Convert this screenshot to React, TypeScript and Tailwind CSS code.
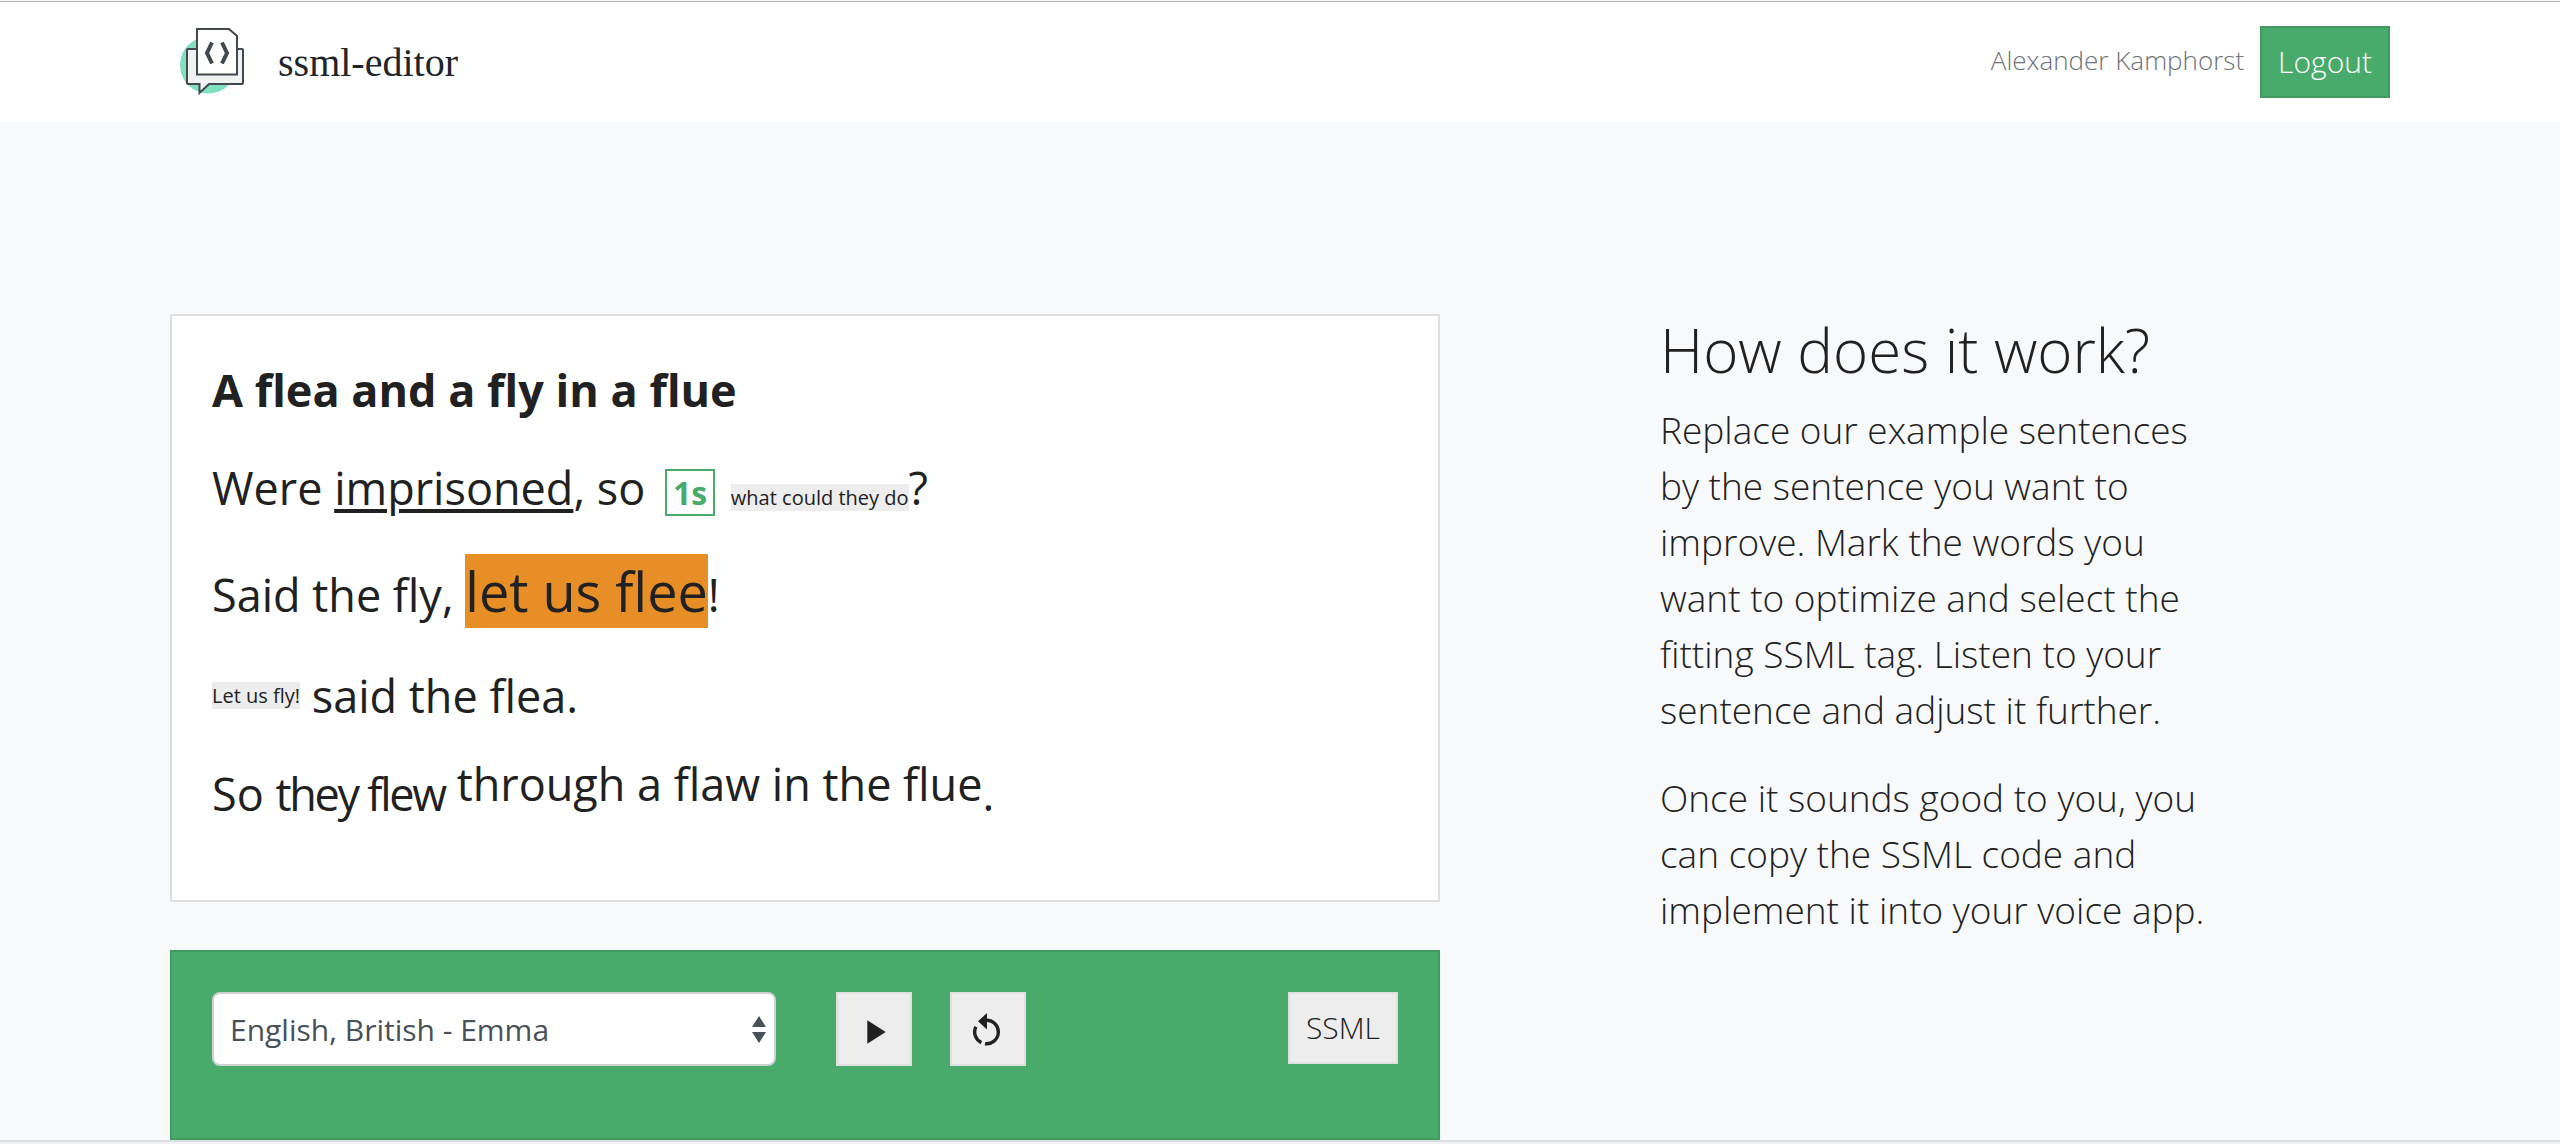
import type { ReactNode } from 'react'
import { MdPlayArrow } from 'react-icons/md'

function Logo() {
  return (
    <svg width="64" height="70" viewBox="0 0 64 70" fill="none" aria-hidden="true">
      <circle cx="28.500" cy="38" r="28.500" fill="#82dfbf" />
      <path
        d="M8 22h54a1 1 0 0 1 1 1v33a1 1 0 0 1-1 1H29L19.500 66V57H8a1 1 0 0 1-1-1V23a1 1 0 0 1 1-1Z"
        fill="#f1f2f2"
        stroke="#42484f"
        strokeWidth="2"
      />
      <path d="M17 2h32l8 7v38.500H17V2Z" fill="#fff" stroke="#42484f" strokeWidth="2" />
      <path d="M32 15.500l-5 10.500 5 10.500M42 15.500L47 26l-5 10.500" stroke="#42484f" strokeWidth="4" />
    </svg>
  )
}

function ResetIcon() {
  return (
    <svg width="30" height="33" viewBox="0 0 30 33" fill="none" aria-hidden="true">
      <path d="M13.500 7.200A11.800 11.800 0 1 1 12 30.700M2.900 13.800A11.800 11.800 0 0 0 8.300 29.600" stroke="#212121" strokeWidth="3.400" />
      <path d="M5 8.300L14 0v16.500z" fill="#212121" />
    </svg>
  )
}

function Header() {
  return (
    <header className="border-t border-[#b3b6b6] bg-white">
      <div className="mx-auto flex max-w-[2280px] items-center justify-between px-[30px] py-6">
        <a href="#" className="flex items-center gap-[34px] pl-2.5">
          <Logo />
          <span className="pt-0.5 font-['Liberation_Serif',serif] text-[40px] leading-[60px] text-[#212529]">
            ssml-editor
          </span>
        </a>
        <div className="flex items-center gap-4">
          <span className="pb-1 text-[26px] text-[#6f7377]">Alexander Kamphorst</span>
          <button type="button" className="border-2 border-[#419b60] bg-[#49ab6b] px-4 py-2.5 text-[30px] leading-12 text-white">
            Logout
          </button>
        </div>
      </div>
    </header>
  )
}

function Whisper({ children }: { children: ReactNode }) {
  return <span className="bg-[#ededed] text-[20px]">{children}</span>
}

function Raised({ children }: { children: ReactNode }) {
  return <span className="relative -top-2.5">{children}</span>
}

function Editor() {
  return (
    <div className="flex flex-col gap-[30px] border-2 border-[#dedfe0] bg-white px-10 pt-10 pb-[73px] text-[45px] leading-normal font-normal">
      <p className="font-bold">A flea and a fly in a flue</p>
      <p>
        Were <span className="underline decoration-4 underline-offset-4">imprisoned</span>, so{' '}
        <span className="mr-1 ml-2 border-2 border-[#49ab6b] px-1.5 text-[32px] font-bold text-[#49ab6b]">1s</span>{' '}
        <Whisper>what could they do</Whisper>?
      </p>
      <p>
        Said the fly, <span className="bg-[#e78f26] text-[54px]">let us flee</span>!
      </p>
      <p>
        <Raised>
          <Whisper>Let us fly!</Whisper>
        </Raised>{' '}
        said the flea.
      </p>
      <p>
        So <span className="tracking-tighter">they flew</span> <Raised>through a flaw in the flue</Raised>.
      </p>
    </div>
  )
}

function Controls() {
  return (
    <div className="flex items-start border-2 border-[#419b60] bg-[#49ab6b] px-10 pt-10 pb-[72px]">
      <div className="relative w-[564px]">
        <select
          aria-label="Voice"
          className="h-[74px] w-full appearance-none rounded-lg border-2 border-[#ced0d2] bg-white px-4 text-[30px] font-normal text-[#495057]"
        >
          <option>English, British - Emma</option>
        </select>
        <svg
          width="14"
          height="27"
          viewBox="0 0 14 27"
          className="pointer-events-none absolute top-6 right-2.5"
          fill="#495057"
          aria-hidden="true"
        >
          <path d="M7 0l7 11H0zM7 27L0 16h14z" />
        </svg>
      </div>
      <button type="button" aria-label="Play" className="ml-15 flex h-[74px] w-[76px] items-center justify-center border-2 border-[#dfe0e0] bg-[#ededed] pt-1.5">
        <MdPlayArrow size={40} />
      </button>
      <button type="button" aria-label="Reset" className="ml-[38px] flex h-[74px] w-[76px] items-center justify-center border-2 border-[#dfe0e0] bg-[#ededed]">
        <ResetIcon />
      </button>
      <button type="button" className="ml-auto border-2 border-[#dfe0e0] bg-[#ededed] px-4 py-2.5 text-[30px] leading-12">
        SSML
      </button>
    </div>
  )
}

export default function App() {
  return (
    <div className="flex min-h-screen flex-col bg-[#f8f9fb] pt-px font-['Open_Sans',sans-serif] font-light text-[#212121]">
      <Header />
      <main className="mx-auto grid w-full max-w-[2280px] flex-1 grid-cols-12 pt-48">
        <div className="col-span-7 flex flex-col gap-12 px-[30px]">
          <Editor />
          <Controls />
        </div>
        <aside className="col-span-3 col-start-9">
          <h1 className="mb-4 text-[60px] leading-[72px]">How does it work?</h1>
          <p className="mb-8 text-[37px] leading-14">
            Replace our example sentences by the sentence you want to improve. Mark the words you want to optimize and
            select the fitting SSML tag. Listen to your sentence and adjust it further.
          </p>
          <p className="text-[37px] leading-14">
            Once it sounds good to you, you can copy the SSML code and implement it into your voice app.
          </p>
        </aside>
      </main>
      <footer className="h-1 border-t-2 border-[#dcdfe1] bg-[#f1f1f1]" />
    </div>
  )
}
